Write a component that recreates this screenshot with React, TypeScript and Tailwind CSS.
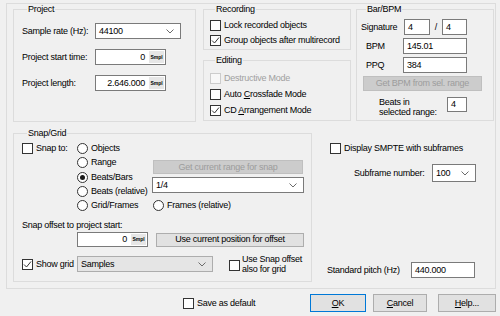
import React from 'react';

type Kids = { children?: React.ReactNode; className?: string };

const Chevron = () => (
  <svg width="8" height="5" viewBox="0 0 8 5" className="shrink-0">
    <path d="M0.5 0.5 L4 4 L7.5 0.5" fill="none" stroke="#6b6b6b" strokeWidth="1" />
  </svg>
);

function Group({ label, className = '', children }: Kids & { label: string }) {
  return (
    <fieldset className={`border border-[#dcdcdc] ${className}`}>
      <legend className="ml-[5px] px-[1px] leading-[11px]">{label}</legend>
      {children}
    </fieldset>
  );
}

function Box({ checked, disabled, className = '' }: { checked?: boolean; disabled?: boolean; className?: string }) {
  return (
    <span
      className={`w-[11px] h-[11px] border flex items-center justify-center shrink-0 ${
        disabled ? 'border-[#cccccc] bg-[#f7f7f7]' : 'border-[#333333] bg-white'
      } ${className}`}
    >
      {checked && (
        <svg width="9" height="9" viewBox="0 0 9 9">
          <path d="M1 4.5 L3.5 7 L8 1.5" fill="none" stroke="#333333" strokeWidth="1" />
        </svg>
      )}
    </span>
  );
}

function Check({ checked, disabled, children, className = '' }: Kids & { checked?: boolean; disabled?: boolean }) {
  return (
    <div className={`flex items-center h-[11px] ${className}`}>
      <Box checked={checked} disabled={disabled} />
      <span className={`ml-[3px] whitespace-nowrap ${disabled ? 'text-[#a0a0a0]' : ''}`}>{children}</span>
    </div>
  );
}

function Radio({ checked, children, className = '' }: Kids & { checked?: boolean }) {
  return (
    <div className={`flex items-center ${className}`}>
      <span className="w-[11px] h-[11px] rounded-full border border-[#333333] bg-white flex items-center justify-center shrink-0">
        {checked && <span className="w-[5px] h-[5px] rounded-full bg-[#1a1a1a]" />}
      </span>
      <span className="ml-[3px] whitespace-nowrap">{children}</span>
    </div>
  );
}

function Field({ value, right, smpl, className = '' }: { value: string; right?: boolean; smpl?: boolean; className?: string }) {
  return (
    <div className={`flex items-center bg-white border border-[#7a7a7a] ${className}`}>
      <span className={`flex-1 px-[3px] whitespace-nowrap ${right ? 'text-right' : ''}`}>{value}</span>
      {smpl && (
        <span className="self-stretch w-[15px] m-[1px] bg-[#e6e6e6] flex items-center justify-center text-[5px] font-bold tracking-normal">
          Smpl
        </span>
      )}
    </div>
  );
}

function Combo({ value, gray, className = '' }: { value: string; gray?: boolean; className?: string }) {
  return (
    <div
      className={`flex items-center justify-between pl-[3px] pr-[6px] border ${
        gray ? 'bg-[#e5e5e5] border-[#adadad]' : 'bg-white border-[#7a7a7a]'
      } ${className}`}
    >
      <span className="whitespace-nowrap">{value}</span>
      <Chevron />
    </div>
  );
}

function Btn({ children, disabled, def, className = '' }: Kids & { disabled?: boolean; def?: boolean }) {
  return (
    <button
      type="button"
      className={`flex items-center justify-center border whitespace-nowrap ${
        disabled
          ? 'bg-[#cccccc] border-[#bfbfbf] text-[#9c9c9c]'
          : def
          ? 'bg-[#e1e1e1] border-[#0078d7]'
          : 'bg-[#e1e1e1] border-[#adadad]'
      } ${className}`}
    >
      {children}
    </button>
  );
}

export default function App() {
  return (
    <div className="w-[500px] h-[316px] overflow-hidden bg-[#f0f0f0] text-black text-[9px] leading-[11px] tracking-[-0.25px] font-['Liberation_Sans',Arial,sans-serif] select-none">
      <div className="ml-[6px] mt-[3px] w-[490px] h-[286px] border border-[#dcdcdc] pl-[6px]">
        {/* top row */}
        <div className="flex items-start h-[118px]">
          <Group label="Project" className="w-[183px] h-[118px] pl-[8px]">
            <div className="mt-[8px] grid grid-cols-[73px_auto] gap-y-[10px] items-center">
              <span>Sample rate (Hz):</span>
              <Combo value="44100" className="w-[86px] h-[16px]" />
              <span>Project start time:</span>
              <Field value="0" right smpl className="w-[71px] h-[16px]" />
              <span>Project length:</span>
              <Field value="2.646.000" right smpl className="w-[71px] h-[16px]" />
            </div>
          </Group>

          <div className="ml-[7px] w-[148px] flex flex-col">
            <Group label="Recording" className="h-[46px] pl-[6px]">
              <div className="mt-[5px] flex flex-col gap-[4px]">
                <Check>Lock recorded objects</Check>
                <Check checked>Group objects after multirecord</Check>
              </div>
            </Group>
            <Group label="Editing" className="mt-[5px] h-[66px] pl-[6px]">
              <div className="mt-[7px] flex flex-col gap-[5px]">
                <Check disabled>Destructive Mode</Check>
                <Check>
                  Auto <u>C</u>rossfade Mode
                </Check>
                <Check checked>
                  CD <u>A</u>rrangement Mode
                </Check>
              </div>
            </Group>
          </div>

          <Group label="Bar/BPM" className="ml-[5px] w-[138px] h-[117px] pl-[4px]">
            <div className="mt-[4px] flex items-center h-[16px]">
              <span className="w-[43px]">Signature</span>
              <Field value="4" className="w-[26px] h-[16px]" />
              <span className="w-[12px] text-center">/</span>
              <Field value="4" className="w-[25px] h-[16px]" />
            </div>
            <div className="mt-[3px] flex items-center h-[16px]">
              <span className="w-[42px] pl-[5px]">BPM</span>
              <Field value="145.01" className="w-[64px] h-[16px]" />
            </div>
            <div className="mt-[3px] flex items-center h-[16px]">
              <span className="w-[42px] pl-[5px]">PPQ</span>
              <Field value="384" className="w-[64px] h-[16px]" />
            </div>
            <Btn disabled className="mt-[3px] ml-[2px] w-[119px] h-[15px]">
              Get BPM from sel. range
            </Btn>
            <div className="mt-[6px] flex items-start">
              <span className="ml-[18px] w-[68px] leading-[10px]">
                Beats in
                <br />
                selected range:
              </span>
              <Field value="4" className="w-[20px] h-[15px]" />
            </div>
          </Group>
        </div>

        {/* bottom row */}
        <div className="mt-[6px] flex items-start">
          <Group label="Snap/Grid" className="w-[299px] h-[154px] pl-[8px]">
            <div className="mt-[2px] flex">
              <div className="w-[55px] h-[14px] flex items-center">
                <Check>Snap to:</Check>
              </div>
              <div className="w-[75px] flex flex-col">
                <Radio className="h-[14px]">Objects</Radio>
                <Radio className="h-[15px]">Range</Radio>
                <Radio checked className="h-[14px]">Beats/Bars</Radio>
                <Radio className="h-[14px]">Beats (relative)</Radio>
                <Radio className="h-[14px]">Grid/Frames</Radio>
              </div>
              <div className="w-[152px] flex flex-col">
                <Btn disabled className="mt-[19px] ml-[1px] w-[150px] h-[14px]">
                  Get current range for snap
                </Btn>
                <Combo value="1/4" className="mt-[3px] w-[152px] h-[16px]" />
                <Radio className="mt-[5px] ml-[1px] h-[14px]">Frames (relative)</Radio>
              </div>
            </div>
            <div className="mt-[8px]">Snap offset to project start:</div>
            <div className="mt-[1px] flex items-center">
              <Field value="0" right smpl className="ml-[55px] w-[71px] h-[15px]" />
              <Btn className="ml-[8px] w-[148px] h-[14px]">Use current position for offset</Btn>
            </div>
            <div className="mt-[9px] flex items-center h-[16px]">
              <div className="w-[55px]">
                <Check checked>Show grid</Check>
              </div>
              <Combo gray value="Samples" className="w-[136px] h-[16px]" />
              <div className="ml-[16px] flex items-center">
                <Box className="mt-[3px]" />
                <span className="ml-[2px] leading-[10px] whitespace-nowrap">
                  Use Snap offset
                  <br />
                  also for grid
                </span>
              </div>
            </div>
          </Group>

          <div className="ml-[8px] flex flex-col">
            <Check className="mt-[15px] ml-[10px]">Display SMPTE with subframes</Check>
            <div className="mt-[10px] flex items-center h-[18px]">
              <span className="ml-[34px] w-[78px]">Subframe number:</span>
              <Combo value="100" className="w-[44px] h-[18px]" />
            </div>
            <div className="mt-[80px] flex items-center h-[16px]">
              <span className="ml-[7px] w-[84px]">Standard pitch (Hz)</span>
              <Field value="440.000" className="w-[64px] h-[16px]" />
            </div>
          </div>
        </div>
      </div>

      {/* dialog buttons */}
      <div className="mt-[5px] flex items-center h-[18px]">
        <Check className="ml-[183px] w-[127px]">Save as default</Check>
        <Btn def className="w-[56px] h-[18px]">
          <u>O</u>K
        </Btn>
        <Btn className="ml-[7px] w-[54px] h-[18px]">
          <u>C</u>ancel
        </Btn>
        <Btn className="ml-[11px] w-[58px] h-[18px]">
          <u>H</u>elp...
        </Btn>
      </div>
    </div>
  );
}
